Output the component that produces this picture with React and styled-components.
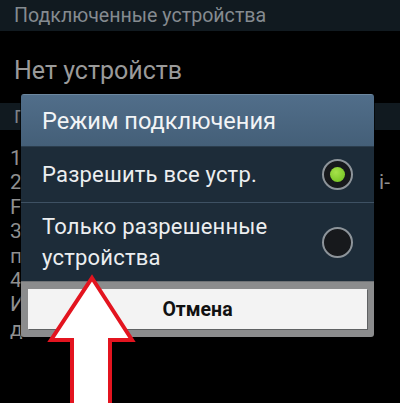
import React from 'react';
import styled, { createGlobalStyle } from 'styled-components';

const GlobalStyle = createGlobalStyle`
  html, body {
    margin: 0;
    padding: 0;
    background: #000;
  }
  body {
    font-family: Roboto, "Noto Sans", "DejaVu Sans", sans-serif;
  }
`;

const Screen = styled.div`
  position: relative;
  width: 400px;
  height: 403px;
  overflow: hidden;
  background: #000;
`;

const TopBar = styled.div`
  height: 31px;
  background: #111a20;
  color: #858b90;
  font-size: 19.6px;
  line-height: 31px;
  padding-left: 14px;
  white-space: nowrap;
`;

const EmptyText = styled.div`
  height: 72px;
  color: #9a9a9a;
  font-size: 25px;
  line-height: 80px;
  padding-left: 14px;
`;

const SectionHeader = styled.div`
  height: 27px;
  background: #111a20;
  color: #7d8388;
  font-size: 19px;
  line-height: 27px;
  padding-left: 14px;
`;

const List = styled.div`
  display: flex;
  flex-direction: column;
  padding: 16px 0 0 10px;
`;

const ListLine = styled.div`
  color: #8f8f8f;
  font-size: 21px;
  line-height: 24.4px;
  height: 24.4px;
  white-space: nowrap;
  display: flex;
  justify-content: space-between;
  width: 380px;
`;

const Dialog = styled.div`
  position: absolute;
  left: 21px;
  top: 94px;
  width: 353px;
  border-radius: 3px;
  overflow: hidden;
  box-shadow: 0 0 0 1px rgba(0, 0, 0, 0.6);
`;

const DialogTitle = styled.div`
  height: 51px;
  display: flex;
  align-items: center;
  padding-left: 21px;
  background: linear-gradient(#516e8a, #445f78);
  border-top: 1px solid #6d88a0;
  border-bottom: 1px solid #2b3d4d;
  color: #f2f4f6;
  font-size: 23.6px;
`;

const Option = styled.div`
  height: ${({ tall }) => (tall ? '78px' : '55px')};
  display: flex;
  align-items: center;
  justify-content: space-between;
  padding: 0 21px 0 21px;
  background: #1d2c39;
  border-top: ${({ first }) => (first ? 'none' : '1px solid #3e5163')};
  color: #eceef0;
  font-size: 22px;
  line-height: 31px;
  letter-spacing: 0.2px;
`;

const Radio = styled.span`
  flex: none;
  width: 27px;
  height: 27px;
  border-radius: 50%;
  border: 2px solid #8d949a;
  background: #17191c;
  display: flex;
  align-items: center;
  justify-content: center;
`;

const RadioDot = styled.span`
  width: 15px;
  height: 15px;
  border-radius: 50%;
  background: radial-gradient(circle at 40% 35%, #a6e24a, #6cbd1c);
`;

const ButtonBar = styled.div`
  background: #8b8c8d;
  padding: 7px 7px 8px 7px;
  border-top: 1px solid #6f7275;
`;

const Button = styled.button`
  display: block;
  width: 339px;
  height: 40px;
  border: none;
  background: #f3f3f3;
  box-shadow: 1px 1px 0 #5f6163;
  color: #111;
  font-family: Roboto, "Noto Sans", sans-serif;
  font-weight: bold;
  font-size: 19.5px;
`;

const Arrow = styled.svg`
  position: absolute;
  left: 46px;
  top: 274px;
`;

const lines = [
  ['1', ''],
  ['2', 'i-'],
  ['F', ''],
  ['3', ''],
  ['п', ''],
  ['4', ''],
  ['И', ''],
  ['д', ''],
];

export default function App() {
  return (
    <Screen>
      <GlobalStyle />
      <TopBar>Подключенные устройства</TopBar>
      <EmptyText>Нет устройств</EmptyText>
      <SectionHeader>П</SectionHeader>
      <List>
        {lines.map(([l, r], i) => (
          <ListLine key={i}>
            <span>{l}</span>
            <span>{r}</span>
          </ListLine>
        ))}
      </List>

      <Dialog>
        <DialogTitle>Режим подключения</DialogTitle>
        <Option first>
          <span>Разрешить все устр.</span>
          <Radio>
            <RadioDot />
          </Radio>
        </Option>
        <Option tall>
          <span>
            Только разрешенные
            <br />
            устройства
          </span>
          <Radio />
        </Option>
        <ButtonBar>
          <Button>Отмена</Button>
        </ButtonBar>
      </Dialog>

      <Arrow width="92" height="140" viewBox="0 0 92 140">
        <polygon
          points="46,4 86,66 64,66 64,140 26,140 26,66 5,66"
          fill="#ffffff"
          stroke="#e3141f"
          strokeWidth="4"
          strokeLinejoin="miter"
        />
      </Arrow>
    </Screen>
  );
}
